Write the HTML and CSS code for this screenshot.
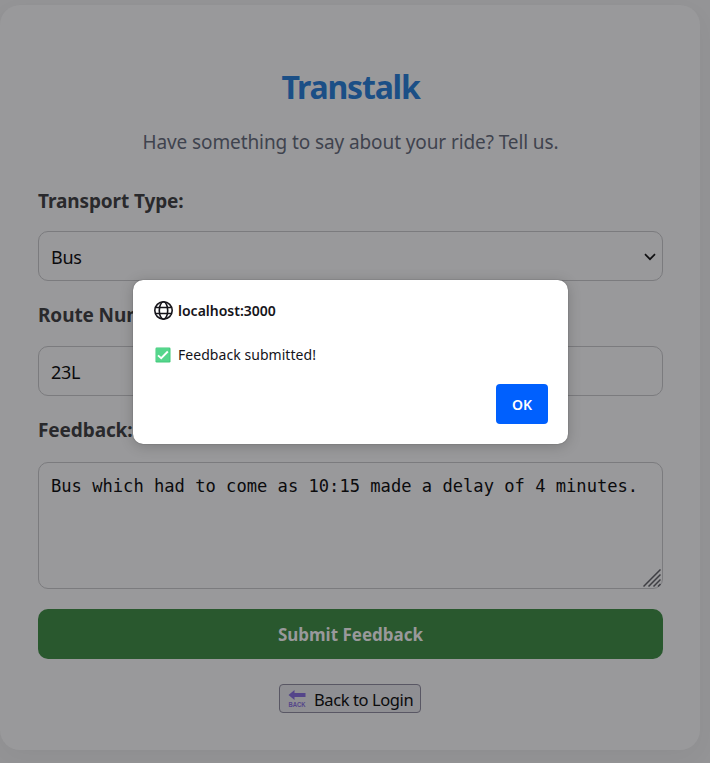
FILE: index.html
```html
<!DOCTYPE html>
<html lang="en">
<head>
<meta charset="utf-8">
<title>Transtalk</title>
<link rel="stylesheet" href="styles.css">
</head>
<body>
<main class="card">
  <h1><span>Transtalk</span></h1>
  <p class="intro"><span>Have something to say about your ride? Tell us.</span></p>
  <form class="form">
    <div class="label"><span>Transport Type:</span></div>
    <div class="field"><span>Bus</span>
      <svg class="chevron" width="12" height="8" viewBox="0 0 12 8"><path d="M1 1.200 6 6.200 11 1.200" fill="none" stroke="#101012" stroke-width="1.700"/></svg>
    </div>
    <div class="label"><span>Route Number:</span></div>
    <div class="field"><span>23L</span></div>
    <div class="label"><span>Feedback:</span></div>
    <div class="area"><span>Bus which had to come as 10:15 made a delay of 4 minutes.</span>
      <svg class="grip" width="18" height="18" viewBox="0 0 18 18"><path d="M.5 17.500 17.500 .5M5.500 17.500 17.500 5.500M10.500 17.500 17.500 10.500M15 17.500 17.500 15" fill="none" stroke="#3e3e43" stroke-width="1.500"/></svg>
    </div>
    <div class="submit"><span>Submit Feedback</span></div>
  </form>
  <div class="back">
    <svg width="18" height="20" viewBox="0 0 18 20"><path d="M.5 6 6.500 1V4H17.500V8H6.500V11Z" fill="#54458a"/><text x="0.500" y="17.500" textLength="17" lengthAdjust="spacingAndGlyphs" class="back-caption">BACK</text></svg>
    <span>Back to Login</span>
  </div>
</main>
<section class="dialog" role="dialog">
  <div class="origin">
    <svg width="20" height="20" viewBox="0 0 20 20" fill="none" stroke="#15141a" stroke-width="1.600"><circle cx="9.500" cy="9.500" r="8.700"/><ellipse cx="9.500" cy="9.500" rx="4.200" ry="8.700"/><path d="M1.500 6.500H17.500M1.500 12.500H17.500"/></svg>
    <span>localhost:3000</span>
  </div>
  <div class="message">
    <svg width="16" height="16" viewBox="0 0 16 16"><rect x=".5" y=".5" width="15" height="15" rx="1.200" fill="#42c97b"/><rect x="1" y="1" width="13.500" height="13.500" rx="1" fill="#55d68c"/><path d="M3 8.300 6.200 11.200 12.800 4.500" fill="none" stroke="#fff" stroke-width="1.800"/></svg>
    <span>Feedback submitted!</span>
  </div>
  <div class="ok"><span>OK</span></div>
</section>
</body>
</html>
```
FILE: styles.css
```css
* { box-sizing: border-box; }
body {
  margin: 0;
  height: 763px;
  padding-top: 5px;
  overflow: hidden;
  background: #949496;
  font-family: "Noto Sans", "Open Sans", sans-serif;
  color: #0b0b0d;
}
.card {
  width: 700px;
  height: 745px;
  padding: 59px 37px 0 38px;
  border-radius: 20px;
  background: #99999b;
  box-shadow: 0 8px 24px rgba(0, 0, 0, .04);
  display: flex;
  flex-direction: column;
  align-items: center;
}
h1 {
  margin: 0;
  height: 46px;
  line-height: 46px;
  font-size: 32px;
  font-weight: 700;
  letter-spacing: -1.200px;
  color: #1b4f86;
}
.intro {
  margin: 17px 0 0;
  height: 30px;
  line-height: 30px;
  font-size: 19px;
  letter-spacing: -.1px;
  color: #3f434e;
}
.form { width: 100%; }
.label {
  height: 28px;
  line-height: 28px;
  margin: 30px 0 16px;
  font-size: 19px;
  font-weight: 700;
  letter-spacing: -.1px;
  color: #29292c;
}
.field + .label { margin: 20px 0 17px; }
.field {
  height: 50px;
  padding: 2px 6px 0 12px;
  border: 1px solid #7b7b7e;
  border-radius: 10px;
  display: flex;
  align-items: center;
  justify-content: space-between;
  font-size: 18px;
  letter-spacing: -.3px;
}
.area {
  height: 127px;
  margin-top: 18px;
  padding: 11px 12px;
  border: 1px solid #7b7b7e;
  border-radius: 10px;
  position: relative;
  font: 17.120px/24px "DejaVu Sans Mono", monospace;
  white-space: nowrap;
}
.grip { position: absolute; right: 1px; bottom: 1px; }
.submit {
  height: 50px;
  margin-top: 20px;
  border-radius: 10px;
  background: #29582e;
  color: #99999b;
  line-height: 51px;
  text-align: center;
  font-size: 17px;
  font-weight: 700;
  letter-spacing: 0;
}
.back {
  width: 142px;
  height: 29px;
  margin: 25px 1px 0 0;
  padding: 1px 6px 0 8px;
  border: 1px solid #595764;
  border-radius: 4px;
  background: #8f8f93;
  display: flex;
  align-items: center;
  gap: 8px;
  font-size: 16.500px;
  letter-spacing: -.4px;
  white-space: nowrap;
}
.back svg { flex: none; overflow: visible; }
.back-caption {
  font: 700 7.500px "Liberation Sans", sans-serif;
  letter-spacing: 0;
  fill: #54458a;
}
.dialog {
  position: absolute;
  left: 133px;
  top: 280px;
  width: 435px;
  height: 164px;
  padding: 20px 20px 20px 21px;
  border-radius: 10px;
  background: #fff;
  box-shadow: 0 0 1px rgba(0, 0, 0, .6), 0 2px 14px rgba(0, 0, 0, .2);
  color: #15141a;
  display: flex;
  flex-direction: column;
  font-size: 14px;
}
.origin, .message {
  display: flex;
  align-items: center;
  height: 22px;
}
.origin span, .message span { margin-top: -2px; }
.origin { gap: 4px; font-weight: 600; letter-spacing: 0; }
.message { margin-top: 22px; padding-left: 1px; gap: 7px; letter-spacing: .05px; }
.ok {
  width: 52px;
  height: 40px;
  margin-top: auto;
  align-self: flex-end;
  border-radius: 4px;
  background: #0060fe;
  color: #fff;
  text-align: center;
  line-height: 41px;
  font-weight: 600;
}
```
